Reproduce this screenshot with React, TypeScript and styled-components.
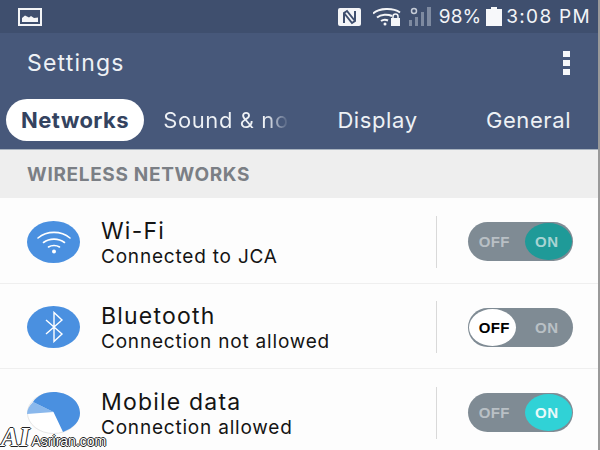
import styled, { createGlobalStyle } from "styled-components";

const GlobalStyle = createGlobalStyle`
  html, body {
    margin: 0;
    padding: 0;
    background: #ffffff;
  }
  * {
    box-sizing: border-box;
  }
`;

const Screen = styled.div`
  position: relative;
  width: 600px;
  height: 450px;
  overflow: hidden;
  background: #fdfdfd;
  border-right: 2px solid #9a9a9a;
  font-family: Inter, Roboto, sans-serif;
`;

const StatusBar = styled.div`
  height: 33px;
  display: flex;
  align-items: center;
  background: #3f4f6e;
  padding: 0 7px 0 18px;
  color: #f2f4f7;
`;

const StatusRight = styled.div`
  margin-left: auto;
  display: flex;
  align-items: center;
`;

const Percent = styled.span`
  font-size: 19px;
  letter-spacing: 0.1px;
  line-height: 33px;
`;

const Clock = styled(Percent)`
  letter-spacing: 1.3px;
`;

const Toolbar = styled.div`
  height: 117px;
  background: #47587a;
  border-bottom: 1px solid #a9b3bf;
`;

const TitleRow = styled.div`
  height: 60px;
  margin-bottom: 6px;
  display: flex;
  align-items: center;
  justify-content: space-between;
  padding: 0 28px 0 27px;
`;

const Title = styled.div`
  font-size: 23px;
  letter-spacing: 1.2px;
  color: #eef1f5;
`;

const Dots = styled.div`
  display: flex;
  flex-direction: column;
  gap: 3px;
`;

const Dot = styled.span`
  width: 7px;
  height: 6px;
  background: #f7f8fa;
`;

const Tabs = styled.div`
  display: flex;
  align-items: center;
  height: 42px;
  padding-left: 6px;
`;

const Tab = styled.div<{ $active?: boolean; $width: number }>`
  width: ${(p) => p.$width}px;
  height: 42px;
  flex: none;
  display: flex;
  align-items: center;
  justify-content: center;
  border-radius: 21px;
  font-size: 22px;
  letter-spacing: ${(p) => (p.$active ? "0.4px" : "0.6px")};
  font-weight: ${(p) => (p.$active ? 700 : 400)};
  color: ${(p) => (p.$active ? "#34435f" : "#eef1f5")};
  background: ${(p) => (p.$active ? "#ffffff" : "transparent")};
  white-space: nowrap;
`;

const FadedLabel = styled.span`
  margin-left: 18px;
  color: transparent;
  background-image: linear-gradient(90deg, #eef1f5 82%, #47587a 100%);
  background-clip: text;
  -webkit-background-clip: text;
`;

const SectionHeader = styled.div`
  height: 48px;
  display: flex;
  align-items: center;
  padding-left: 27px;
  background: #eeeeee;
  color: #7b7f85;
  font-size: 19px;
  font-weight: 700;
  letter-spacing: 0.67px;
`;

const Row = styled.div`
  height: 85.5px;
  display: flex;
  align-items: center;
  padding: 3px 25px 0 27px;
  border-bottom: 1px solid #efefef;
`;

const IconCircle = styled.div`
  width: 53px;
  height: 42px;
  flex: none;
  display: flex;
  align-items: center;
  justify-content: center;
  border-radius: 50%;
  background: #4a90e0;
`;

const RowText = styled.div`
  margin-left: 21px;
  padding-top: 2px;
  flex: 1;
  color: #141414;
`;

const RowTitle = styled.div`
  font-size: 23px;
  letter-spacing: 1.2px;
  line-height: 28px;
`;

const RowSubtitle = styled.div`
  font-size: 19px;
  letter-spacing: 0.8px;
  line-height: 24px;
`;

const Divider = styled.div`
  width: 1px;
  height: 52px;
  background: #d9d9d9;
  margin-right: 31px;
`;

const Switch = styled.div`
  position: relative;
  width: 105px;
  height: 39px;
  flex: none;
  display: flex;
  align-items: center;
  border-radius: 20px;
  background: #7f8b94;
  font-family: "Liberation Sans", sans-serif;
  font-size: 15px;
  font-weight: 700;
  letter-spacing: 0.4px;
`;

const SwitchLabel = styled.span<{ $color: string }>`
  position: relative;
  width: 50%;
  text-align: center;
  color: ${(p) => p.$color};
`;

const Knob = styled.div<{ $side: "left" | "right"; $color: string }>`
  position: absolute;
  top: 1px;
  ${(p) => p.$side}: 1px;
  width: 47px;
  height: 37px;
  border-radius: 50%;
  background: ${(p) => p.$color};
`;

const Watermark = styled.div`
  position: absolute;
  left: 1px;
  bottom: 1px;
  display: flex;
  align-items: flex-end;
  color: #ffffff;
  text-shadow: -1px 0 #222, 1px 0 #222, 0 -1px #222, 0 1px #222;
`;

const WatermarkLogo = styled.span`
  font-family: "Liberation Serif", serif;
  font-style: italic;
  font-weight: 700;
  font-size: 27px;
  line-height: 24px;
`;

const WatermarkText = styled.span`
  margin-left: 2px;
  font-family: "Liberation Sans", sans-serif;
  font-size: 14px;
  line-height: 15px;
`;

function GalleryIcon() {
  return (
    <svg width="24" height="18" viewBox="0 0 24 18">
      <rect x="1" y="1" width="22" height="16" fill="#3f4f6e" stroke="#f4f5f7" strokeWidth="2" />
      <path d="M4 14V10l3-2.500 4 2 2-1.500 3 2 4-.5V14z" fill="#f4f5f7" />
    </svg>
  );
}

function NfcIcon() {
  return (
    <svg width="23" height="18" viewBox="0 0 23 18" style={{ marginRight: 12 }}>
      <rect width="23" height="18" rx="2" fill="#f4f5f7" />
      <path d="M6 15V5l3-2 8 10M17 3v10l-3 2L6 5" fill="none" stroke="#3f4f6e" strokeWidth="2" />
    </svg>
  );
}

function StatusWifiIcon() {
  return (
    <svg width="28" height="18" viewBox="0 0 28 18" style={{ marginRight: 7 }}>
      <g fill="none" stroke="#f4f5f7" strokeWidth="2">
        <path d="M0 5.500c6-5.500 20-6 27-1" />
        <path d="M4 9.500c4-3.500 11-3.500 15-1.500" />
        <path d="M8 13c2-1.500 5-1.500 7-.5" />
      </g>
      <circle cx="12" cy="16" r="1.500" fill="#f4f5f7" />
      <rect x="18" y="10" width="9" height="8" fill="#f4f5f7" />
      <path d="M20 10V8.500a2.500 2.500 0 0 1 5 0V10" fill="none" stroke="#f4f5f7" strokeWidth="1.500" />
    </svg>
  );
}

function SignalIcon() {
  return (
    <svg width="24" height="19" viewBox="0 0 24 19" style={{ marginRight: 7 }}>
      <g fill="#7e8aa0">
        <rect x="1" y="13" width="3" height="6" />
        <rect x="7" y="10" width="3" height="9" />
        <rect x="13" y="5" width="3" height="14" />
        <rect x="19" y="0" width="4" height="19" />
      </g>
      <circle cx="6" cy="4" r="2.500" fill="none" stroke="#c5cbd6" strokeWidth="1.500" />
    </svg>
  );
}

function BatteryIcon() {
  return (
    <svg width="16" height="19" viewBox="0 0 16 19" style={{ margin: "0 4px 0 5px" }}>
      <path d="M5 0h6v2h5v17H0V2h5z" fill="#f7f8fa" />
    </svg>
  );
}

function WifiIcon() {
  return (
    <svg width="36" height="26" viewBox="0 0 36 26">
      <g fill="none" stroke="#ffffff" strokeWidth="1.600" strokeLinecap="round">
        <path d="M2 9C11 1.500 25 1.500 34 9" />
        <path d="M7.500 13.500c6-4.500 15-4.500 21 0" />
        <path d="M12.500 18c3-2 8-2 11 0" />
      </g>
      <circle cx="18" cy="22.500" r="2" fill="#ffffff" />
    </svg>
  );
}

function BluetoothIcon() {
  return (
    <svg width="20" height="32" viewBox="0 0 20 32">
      <path d="M2 9l16 14-8 7.500V1.500L18 9 2 23" fill="none" stroke="#ffffff" strokeWidth="1.400" />
    </svg>
  );
}

function DataPie() {
  return (
    <svg width="53" height="42" viewBox="0 0 53 42" style={{ flex: "none" }}>
      <ellipse cx="26.500" cy="21" rx="26" ry="20.500" fill="#ffffff" stroke="#e6e6e6" />
      <path d="M26.500 20L0 22C0 18 2 14 6 10z" fill="#8ab8ec" />
      <path d="M26.500 20L6 10C10 4 17 0 26.500 0 41 0 53 9 53 21c0 8-6 15-17 19z" fill="#4a90e0" />
    </svg>
  );
}

type Setting = {
  title: string;
  subtitle: string;
  icon: React.ReactNode;
  on: boolean;
  knob: string;
  text: string;
};

const settings: Setting[] = [
  {
    title: "Wi-Fi",
    subtitle: "Connected to JCA",
    icon: (
      <IconCircle>
        <WifiIcon />
      </IconCircle>
    ),
    on: true,
    knob: "#1f9a98",
    text: "#a8d4d3",
  },
  {
    title: "Bluetooth",
    subtitle: "Connection not allowed",
    icon: (
      <IconCircle>
        <BluetoothIcon />
      </IconCircle>
    ),
    on: false,
    knob: "#ffffff",
    text: "#000000",
  },
  {
    title: "Mobile data",
    subtitle: "Connection allowed",
    icon: <DataPie />,
    on: true,
    knob: "#30d2d6",
    text: "#eafafa",
  },
];

const mutedLabel = "#b9c0c5";

function App() {
  return (
    <Screen>
      <GlobalStyle />
      <StatusBar>
        <GalleryIcon />
        <StatusRight>
          <NfcIcon />
          <StatusWifiIcon />
          <SignalIcon />
          <Percent>98%</Percent>
          <BatteryIcon />
          <Clock>3:08 PM</Clock>
        </StatusRight>
      </StatusBar>
      <Toolbar>
        <TitleRow>
          <Title>Settings</Title>
          <Dots>
            <Dot />
            <Dot />
            <Dot />
          </Dots>
        </TitleRow>
        <Tabs>
          <Tab $active $width={138}>
            Networks
          </Tab>
          <Tab $width={146}>
            <FadedLabel>Sound &amp; no</FadedLabel>
          </Tab>
          <Tab $width={175}>Display</Tab>
          <Tab $width={127}>General</Tab>
        </Tabs>
      </Toolbar>
      <SectionHeader>WIRELESS NETWORKS</SectionHeader>
      {settings.map((s) => (
        <Row key={s.title}>
          {s.icon}
          <RowText>
            <RowTitle>{s.title}</RowTitle>
            <RowSubtitle>{s.subtitle}</RowSubtitle>
          </RowText>
          <Divider />
          <Switch>
            <Knob $side={s.on ? "right" : "left"} $color={s.knob} />
            <SwitchLabel $color={s.on ? mutedLabel : s.text}>OFF</SwitchLabel>
            <SwitchLabel $color={s.on ? s.text : mutedLabel}>ON</SwitchLabel>
          </Switch>
        </Row>
      ))}
      <Watermark>
        <WatermarkLogo>AI</WatermarkLogo>
        <WatermarkText>Asriran.com</WatermarkText>
      </Watermark>
    </Screen>
  );
}

export default App;
